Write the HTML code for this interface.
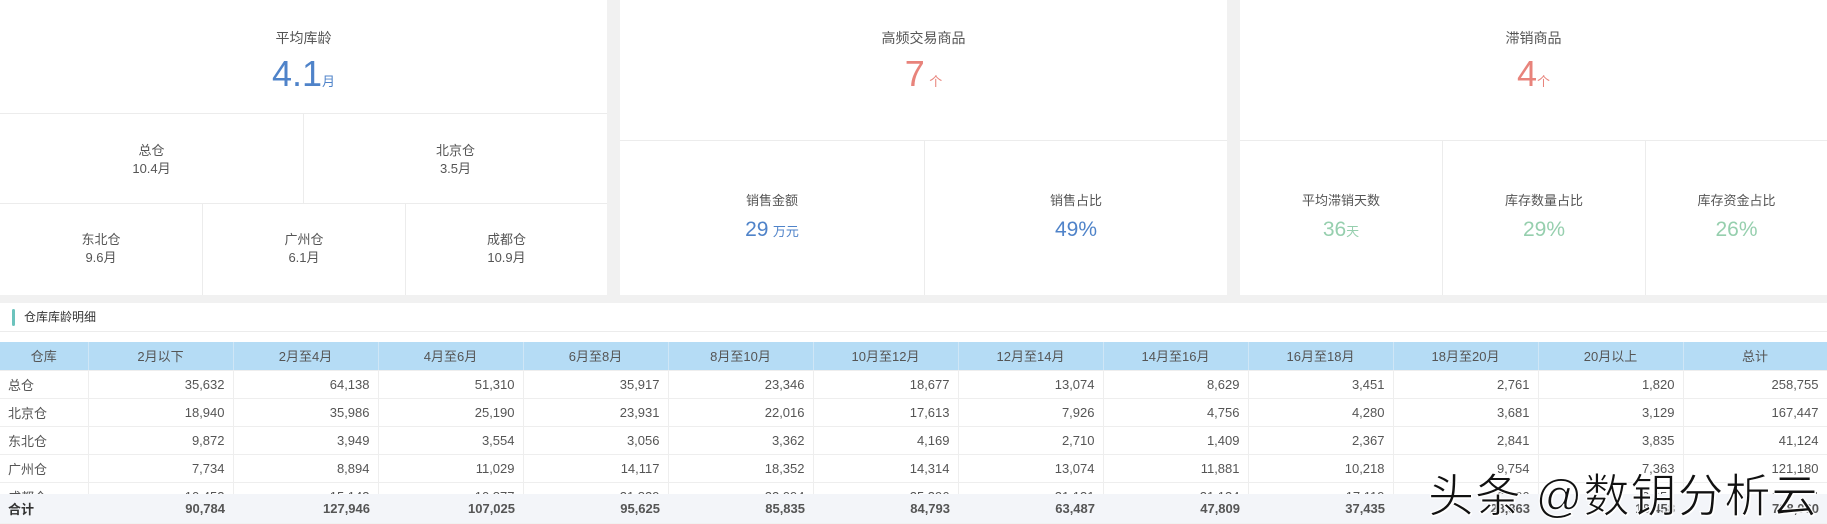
<!DOCTYPE html>
<html><head><meta charset="utf-8"><style>
*{margin:0;padding:0;box-sizing:border-box}
body{width:1827px;height:523px;background:#f1f1f1;font-family:"Liberation Sans","Noto Sans CJK SC",sans-serif;color:#444;position:relative;overflow:hidden}
.card{position:absolute;top:0;height:295px;background:#fff}
.a{position:absolute;text-align:center;left:0;right:0}
.hl{position:absolute;height:1px;background:#ececec}
.vl{position:absolute;width:1px;background:#ececec}
.t{font-size:13px;color:#555}
.big{font-size:36px;line-height:40px}
.mid{font-size:21px;line-height:24px}
.u{font-size:13px}
table{border-collapse:collapse;table-layout:fixed;width:1827px;font-size:13px}
td{height:28px;padding:0 8px;text-align:right;border-right:1px solid #eee;border-bottom:1px solid #eee;color:#555;white-space:nowrap;overflow:hidden}
td:first-child{text-align:left}
thead td{background:#b5dcf5;text-align:center!important;height:28px;border-right:1px solid #cfe6f6}
</style></head><body>

<div class="card" style="left:0;width:607px">
 <div class="a t" style="top:28px;font-size:14px">平均库龄</div>
 <div class="a" style="top:54px;color:#4f83c9"><span class="big">4.1</span><span class="u">月</span></div>
 <div class="hl" style="top:113px;left:0;width:607px"></div>
 <div class="vl" style="top:113px;left:303px;height:90px"></div>
 <div class="a t" style="top:142px;left:0;right:auto;width:303px;line-height:18px">总仓<br>10.4月</div>
 <div class="a t" style="top:142px;left:304px;right:auto;width:303px;line-height:18px">北京仓<br>3.5月</div>
 <div class="hl" style="top:203px;left:0;width:607px"></div>
 <div class="vl" style="top:203px;left:202px;height:92px"></div>
 <div class="vl" style="top:203px;left:405px;height:92px"></div>
 <div class="a t" style="top:231px;left:0;right:auto;width:202px;line-height:18px">东北仓<br>9.6月</div>
 <div class="a t" style="top:231px;left:203px;right:auto;width:202px;line-height:18px">广州仓<br>6.1月</div>
 <div class="a t" style="top:231px;left:406px;right:auto;width:201px;line-height:18px">成都仓<br>10.9月</div>
</div>

<div class="card" style="left:620px;width:607px">
 <div class="a t" style="top:28px;font-size:14px">高频交易商品</div>
 <div class="a" style="top:54px;color:#e8837b"><span class="big">7</span> <span class="u">个</span></div>
 <div class="hl" style="top:140px;left:0;width:607px"></div>
 <div class="vl" style="top:140px;left:304px;height:155px"></div>
 <div class="a t" style="top:190px;left:0;right:auto;width:304px">销售金额</div>
 <div class="a" style="top:218px;left:0;right:auto;width:304px;color:#4f83c9"><span class="mid">29</span> <span class="u">万元</span></div>
 <div class="a t" style="top:190px;left:305px;right:auto;width:302px">销售占比</div>
 <div class="a" style="top:218px;left:305px;right:auto;width:302px;color:#4f83c9"><span class="mid">49%</span></div>
</div>

<div class="card" style="left:1240px;width:587px">
 <div class="a t" style="top:28px;font-size:14px">滞销商品</div>
 <div class="a" style="top:54px;color:#e8837b"><span class="big">4</span><span class="u">个</span></div>
 <div class="hl" style="top:140px;left:0;width:587px"></div>
 <div class="vl" style="top:140px;left:202px;height:155px"></div>
 <div class="vl" style="top:140px;left:405px;height:155px"></div>
 <div class="a t" style="top:190px;left:0;right:auto;width:202px">平均滞销天数</div>
 <div class="a" style="top:218px;left:0;right:auto;width:202px;color:#96cfae"><span class="mid">36</span><span class="u">天</span></div>
 <div class="a t" style="top:190px;left:203px;right:auto;width:202px">库存数量占比</div>
 <div class="a" style="top:218px;left:203px;right:auto;width:202px;color:#96cfae"><span class="mid">29%</span></div>
 <div class="a t" style="top:190px;left:406px;right:auto;width:181px">库存资金占比</div>
 <div class="a" style="top:218px;left:406px;right:auto;width:181px;color:#96cfae"><span class="mid">26%</span></div>
</div>

<div style="position:absolute;left:0;top:303px;width:1827px;height:220px;background:#fff"></div>
<div style="position:absolute;left:12px;top:309px;width:3px;height:17px;background:#6cc3bd;border-radius:2px"></div>
<div style="position:absolute;left:24px;top:309px;font-size:12px;line-height:17px;color:#333">仓库库龄明细</div>
<div class="hl" style="top:331px;left:0;width:1827px"></div>

<div style="position:absolute;left:0;top:342px;width:1827px;height:152px;overflow:hidden">
<table>
<colgroup><col style="width:88px"><col span="11" style="width:145px"><col style="width:144px"></colgroup>
<thead><tr><td>仓库</td><td>2月以下</td><td>2月至4月</td><td>4月至6月</td><td>6月至8月</td><td>8月至10月</td><td>10月至12月</td><td>12月至14月</td><td>14月至16月</td><td>16月至18月</td><td>18月至20月</td><td>20月以上</td><td>总计</td></tr></thead>
<tbody>
<tr><td>总仓</td><td>35,632</td><td>64,138</td><td>51,310</td><td>35,917</td><td>23,346</td><td>18,677</td><td>13,074</td><td>8,629</td><td>3,451</td><td>2,761</td><td>1,820</td><td>258,755</td></tr>
<tr><td>北京仓</td><td>18,940</td><td>35,986</td><td>25,190</td><td>23,931</td><td>22,016</td><td>17,613</td><td>7,926</td><td>4,756</td><td>4,280</td><td>3,681</td><td>3,129</td><td>167,447</td></tr>
<tr><td>东北仓</td><td>9,872</td><td>3,949</td><td>3,554</td><td>3,056</td><td>3,362</td><td>4,169</td><td>2,710</td><td>1,409</td><td>2,367</td><td>2,841</td><td>3,835</td><td>41,124</td></tr>
<tr><td>广州仓</td><td>7,734</td><td>8,894</td><td>11,029</td><td>14,117</td><td>18,352</td><td>14,314</td><td>13,074</td><td>11,881</td><td>10,218</td><td>9,754</td><td>7,363</td><td>121,180</td></tr>
<tr><td>成都仓</td><td>10,452</td><td>15,143</td><td>10,877</td><td>21,829</td><td>22,094</td><td>25,396</td><td>21,131</td><td>21,134</td><td>17,119</td><td>13,126</td><td>3,654</td><td>199,554</td></tr>
</tbody></table>
</div>
<div style="position:absolute;left:0;top:494px;width:1827px;height:29px;background:#f3f5f9">
<table><colgroup><col style="width:88px"><col span="11" style="width:145px"><col style="width:144px"></colgroup>
<tr style="font-weight:bold"><td style="border:none;height:29px;color:#333">合计</td><td style="border:none">90,784</td><td style="border:none">127,946</td><td style="border:none">107,025</td><td style="border:none">95,625</td><td style="border:none">85,835</td><td style="border:none">84,793</td><td style="border:none">63,487</td><td style="border:none">47,809</td><td style="border:none">37,435</td><td style="border:none">28,863</td><td style="border:none">18,458</td><td style="border:none">788,060</td></tr></table>
</div>
<div style="position:absolute;left:1428px;top:468px;font-size:46px;line-height:56px;letter-spacing:1px;color:#111;-webkit-text-stroke:1px #fff;text-shadow:0 0 2px #fff,1px 1px 0 #fff;white-space:nowrap">头条 @数钥分析云</div>
</body></html>
